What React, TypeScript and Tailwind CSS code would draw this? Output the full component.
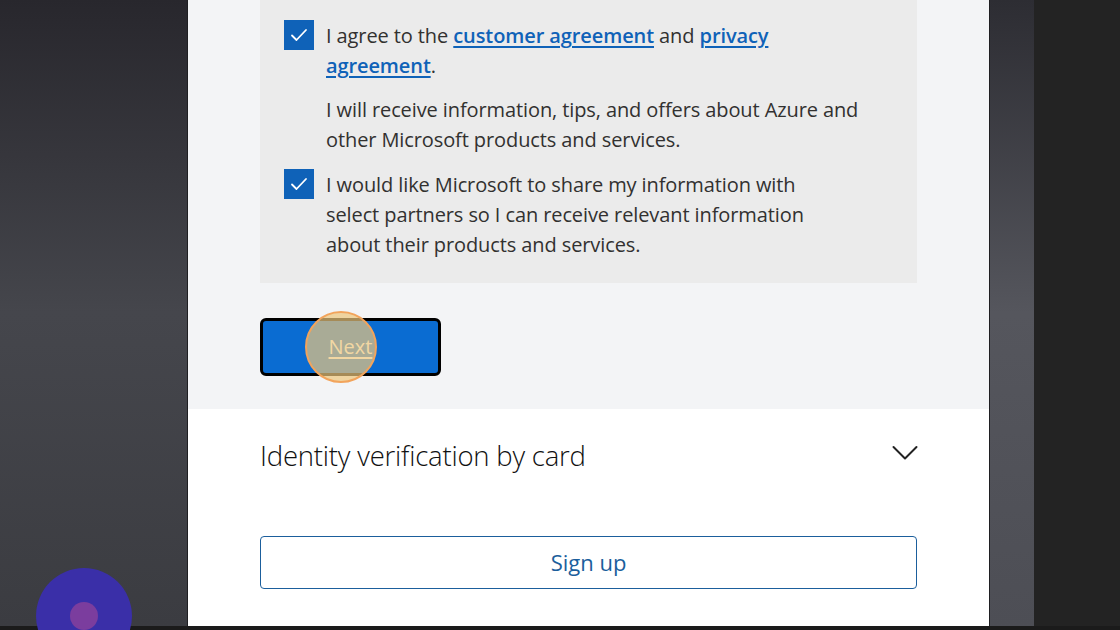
import React from "react"

const font = { fontFamily: '"Open Sans", "Noto Sans", Arial, sans-serif' }

function CheckBox() {
  return (
    <div className="w-[30px] h-[30px] bg-[#0f62b8] flex items-center justify-center shrink-0 mt-[-1px]">
      <svg width="22" height="22" viewBox="0 0 22 22" fill="none">
        <path d="M4 11.5l4.5 4.5L18 6" stroke="white" strokeWidth="1.8" strokeLinecap="round" strokeLinejoin="round" />
      </svg>
    </div>
  )
}

export default function App() {
  return (
    <div className="w-[1120px] h-[630px] overflow-hidden flex flex-col bg-[#1b1b1b] relative" style={font}>
      <div className="flex h-[626px]">
        {/* left backdrop */}
        <div className="w-[188px] shrink-0 bg-gradient-to-b from-[#28272d] via-[#45464c] to-[#3b3c41] border-r border-[#1f1f22]" />

        {/* page */}
        <div className="w-[801px] shrink-0 flex flex-col bg-white">
          <div className="bg-[#f3f4f6] h-[409px] px-[72px] flex flex-col">
            <div className="bg-[#ebebeb] h-[283px] pl-[24px] pt-[21px] text-[20px] leading-[30px] text-[#323130] tracking-[-0.1px]">
              <div className="flex gap-[12px]">
                <CheckBox />
                <div>
                  I agree to the{" "}
                  <a className="text-[#0f62b8] font-semibold underline underline-offset-[3px]">customer agreement</a> and{" "}
                  <a className="text-[#0f62b8] font-semibold underline underline-offset-[3px]">privacy</a>
                  <br />
                  <a className="text-[#0f62b8] font-semibold underline underline-offset-[3px]">agreement</a>.
                </div>
              </div>
              <p className="pl-[42px] mt-[14px]">
                I will receive information, tips, and offers about Azure and
                <br />
                other Microsoft products and services.
              </p>
              <div className="flex gap-[12px] mt-[15px]">
                <CheckBox />
                <div>
                  I would like Microsoft to share my information with
                  <br />
                  select partners so I can receive relevant information
                  <br />
                  about their products and services.
                </div>
              </div>
            </div>

            <div className="mt-[35px]">
              <button className="relative w-[181px] h-[58px] rounded-[6px] border-[3px] border-black bg-[#0a6cd2] text-white text-[20px] underline underline-offset-[3px]">
                Next
                <span className="absolute left-[42px] top-[-10px] w-[72px] h-[72px] rounded-full border-2 border-[#f2a45c] bg-[rgba(237,198,124,0.7)]" />
              </button>
            </div>
          </div>

          <div className="px-[72px] pt-[27px]">
            <div className="flex items-center justify-between h-[40px]">
              <div className="text-[27.5px] font-light text-[#111] tracking-[-0.2px]">Identity verification by card</div>
              <svg width="26" height="16" viewBox="0 0 26 16" fill="none" className="mr-[-1px] mt-[-6px]">
                <path d="M1.5 2l11.5 11.5L24.5 2" stroke="#222" strokeWidth="2" strokeLinecap="round" strokeLinejoin="round" />
              </svg>
            </div>
            <button className="mt-[60px] w-full h-[53px] rounded-[4px] border-[1.5px] border-[#1b5e9c] text-[#1b5e9c] text-[22px] flex items-center justify-center">
              Sign up
            </button>
          </div>
        </div>

        {/* right backdrop */}
        <div className="w-[45px] shrink-0 bg-gradient-to-b from-[#2d2d33] via-[#55565d] to-[#4d4e55] border-l border-[#1f1f22]" />
        <div className="flex-1 bg-[#232323]" />
      </div>
      <div className="h-[4px] bg-[#1b1b1b]" />

      {/* cursor marker */}
      <div className="absolute left-[36px] top-[568px] w-[96px] h-[96px] rounded-full bg-[#3a2fa8] flex items-center justify-center">
        <div className="w-[28px] h-[28px] rounded-full bg-[#7b3d9e]" />
      </div>
    </div>
  )
}
